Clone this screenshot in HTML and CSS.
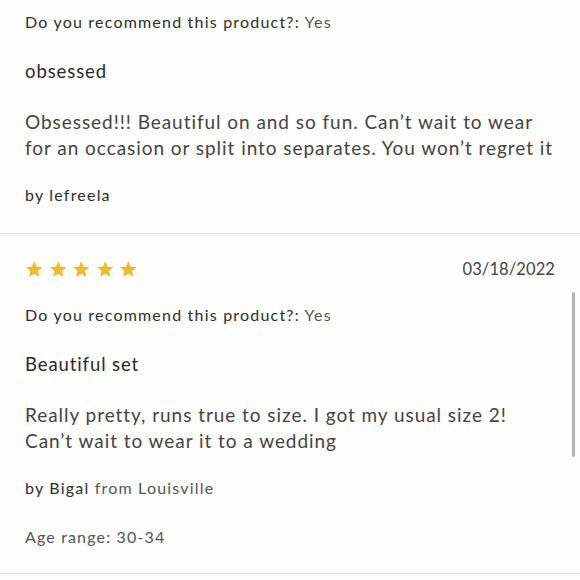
FILE: index.html
```html
<!DOCTYPE html>
<html lang="en">
<head>
<meta charset="utf-8">
<title>Reviews</title>
<link rel="stylesheet" href="styles.css">
</head>
<body>
<div class="reviews">
  <article class="review review-partial">
    <p class="recommend">Do you recommend this product?: <span class="answer">Yes</span></p>
    <h3 class="title">obsessed</h3>
    <p class="body">Obsessed!!! Beautiful on and so fun. Can’t wait to wear for an occasion or split into separates. You won’t regret it</p>
    <p class="author">by lefreela</p>
  </article>
  <article class="review">
    <div class="review-head">
      <div class="stars" aria-label="5 out of 5 stars">
        <svg class="star" viewBox="0 0 24 24"><path d="M12 1.5l3.1 7.1 7.7.6-5.9 5 1.8 7.5L12 17.7l-6.7 4 1.8-7.5-5.9-5 7.7-.6z"/></svg>
        <svg class="star" viewBox="0 0 24 24"><path d="M12 1.5l3.1 7.1 7.7.6-5.9 5 1.8 7.5L12 17.7l-6.7 4 1.8-7.5-5.9-5 7.7-.6z"/></svg>
        <svg class="star" viewBox="0 0 24 24"><path d="M12 1.5l3.1 7.1 7.7.6-5.9 5 1.8 7.5L12 17.7l-6.7 4 1.8-7.5-5.9-5 7.7-.6z"/></svg>
        <svg class="star" viewBox="0 0 24 24"><path d="M12 1.5l3.1 7.1 7.7.6-5.9 5 1.8 7.5L12 17.7l-6.7 4 1.8-7.5-5.9-5 7.7-.6z"/></svg>
        <svg class="star" viewBox="0 0 24 24"><path d="M12 1.5l3.1 7.1 7.7.6-5.9 5 1.8 7.5L12 17.7l-6.7 4 1.8-7.5-5.9-5 7.7-.6z"/></svg>
      </div>
      <span class="date">03/18/2022</span>
    </div>
    <p class="recommend">Do you recommend this product?: <span class="answer">Yes</span></p>
    <h3 class="title">Beautiful set</h3>
    <p class="body">Really pretty, runs true to size. I got my usual size 2!<br>Can’t wait to wear it to a wedding</p>
    <p class="author">by Bigal <span class="from">from Louisville</span></p>
    <p class="age">Age range: 30-34</p>
  </article>
</div>
<div class="scrollbar"></div>
</body>
</html>
```

FILE: styles.css
```css
html, body {
  margin: 0;
  padding: 0;
  background: #fdfdfb;
}
body {
  font-family: "Lato", "Open Sans", sans-serif;
  color: #333;
  width: 580px;
  height: 580px;
  overflow: hidden;
  position: relative;
}
.reviews {
  display: flex;
  flex-direction: column;
}
.review {
  display: flex;
  flex-direction: column;
  padding: 25px 25px 26px;
  border-bottom: 1px solid #e4e4e2;
}
.review-partial {
  padding-top: 12px;
  padding-bottom: 28px;
}
.review p, .review h3 {
  margin: 0;
}
.review-head {
  display: flex;
  justify-content: space-between;
  align-items: center;
  height: 20px;
}
.stars {
  display: flex;
  gap: 5px;
}
.star {
  width: 18.5px;
  height: 18.5px;
  fill: #ecbb2f;
}
.date {
  font-size: 16.5px;
  line-height: 20px;
  color: #444;
  letter-spacing: 0.1px;
}
.recommend {
  font-size: 16px;
  line-height: 20px;
  color: #2e2e2e;
  letter-spacing: 1.2px;
  margin-top: 26px !important;
}
.review-partial .recommend {
  margin-top: 0 !important;
}
.answer {
  color: #555;
}
.title {
  font-size: 18.5px;
  line-height: 24px;
  font-weight: 400;
  color: #2a2a2a;
  letter-spacing: 0.9px;
  margin-top: 27px !important;
}
.body {
  font-size: 19px;
  line-height: 26px;
  color: #444;
  letter-spacing: 0.95px;
  margin-top: 26px !important;
}
.author {
  font-size: 16px;
  line-height: 20px;
  color: #2e2e2e;
  letter-spacing: 1.2px;
  margin-top: 24px !important;
}
.from {
  color: #555;
}
.age {
  font-size: 16px;
  line-height: 20px;
  color: #555;
  letter-spacing: 1.15px;
  margin-top: 29px !important;
}
.scrollbar {
  position: absolute;
  left: 572px;
  top: 292px;
  width: 3px;
  height: 165px;
  border-radius: 2px;
  background: #b3b3b3;
}
```
